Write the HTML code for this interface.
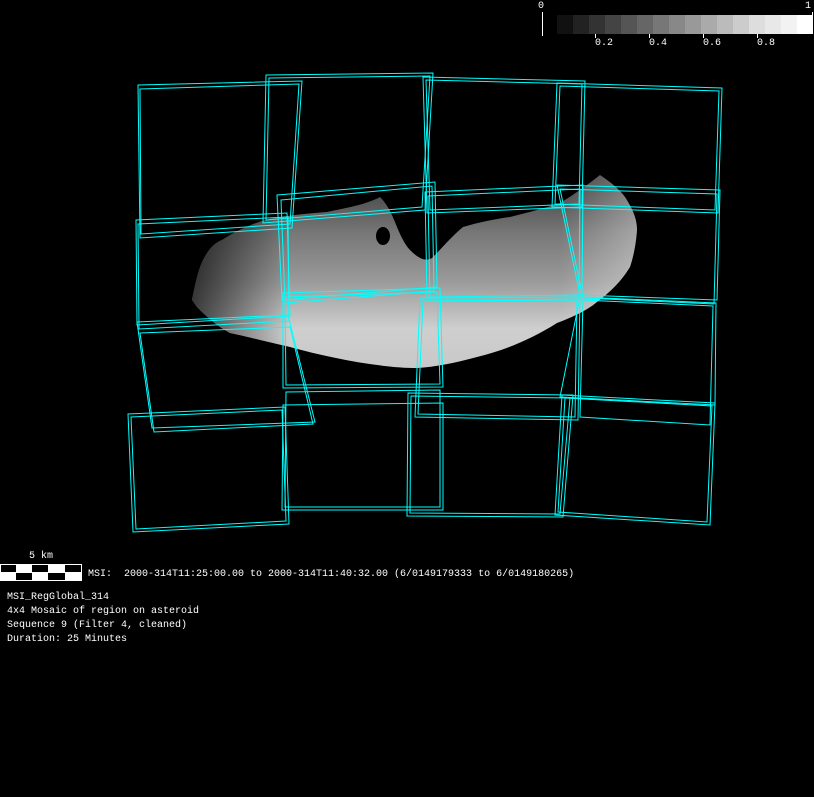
<!DOCTYPE html>
<html><head><style>
html,body{margin:0;padding:0;background:#000;}
body{width:814px;height:797px;position:relative;overflow:hidden;font-family:"Liberation Mono",monospace;color:#fff;font-size:10px;}
.t{position:absolute;white-space:pre;line-height:12px;}
</style></head><body>
<svg width="814" height="797" style="position:absolute;left:0;top:0">
<defs>
<linearGradient id="g" gradientUnits="userSpaceOnUse" x1="0" y1="175" x2="0" y2="368">
<stop offset="0" stop-color="#3a3a3a"/><stop offset="0.3" stop-color="#777"/><stop offset="0.55" stop-color="#9a9a9a"/><stop offset="0.8" stop-color="#cfcfcf"/><stop offset="1" stop-color="#c8c8c8"/>
</linearGradient>
<linearGradient id="l" gradientUnits="userSpaceOnUse" x1="190" y1="0" x2="290" y2="0">
<stop offset="0" stop-color="#000" stop-opacity="0.7"/><stop offset="1" stop-color="#000" stop-opacity="0"/>
</linearGradient>
<linearGradient id="r" gradientUnits="userSpaceOnUse" x1="560" y1="0" x2="640" y2="0">
<stop offset="0" stop-color="#fff" stop-opacity="0"/><stop offset="1" stop-color="#fff" stop-opacity="0.35"/>
</linearGradient>
</defs>
<g id="ast">
<path d="M192,300 C195,285 198,270 203,260 C208,250 214,243 222,240 C240,228 260,220 280,217 C300,214 315,213 327,212 C345,208 365,205 380,197 C388,205 392,215 395,222 C400,235 405,245 410,250 C418,258 425,262 432,258 C442,248 452,236 463,227 C480,222 495,219 510,217 C530,212 545,208 560,203 C575,194 590,183 600,175 C612,183 620,190 625,197 C632,208 637,218 637,230 C636,245 633,258 630,267 C620,283 610,292 597,302 C585,312 570,318 557,323 C530,340 505,350 477,357 C455,363 435,367 417,368 C380,368 330,358 290,347 C260,340 240,335 230,333 C215,325 205,315 197,307 Z" fill="url(#g)"/>
<path d="M192,300 C195,285 198,270 203,260 C208,250 214,243 222,240 C240,228 260,220 280,217 L290,217 L290,347 C260,340 240,335 230,333 C215,325 205,315 197,307 Z" fill="url(#l)"/>
<path d="M560,203 C575,194 590,183 600,175 C612,183 620,190 625,197 C632,208 637,218 637,230 C636,245 633,258 630,267 C620,283 610,292 597,302 C585,312 570,318 557,323 Z" fill="url(#r)"/>
</g>
<ellipse cx="383" cy="236" rx="7" ry="9" fill="#000"/>
<g fill="none" stroke="#00ffff" stroke-width="1">
<polygon points="138,85 302,81 292,228 140,238"/><polygon points="140,89 299,84 290,224 141,234"/>
<polygon points="266,75 433,73 425,210 263,223"/><polygon points="269,78 430,76 422,207 266,220"/>
<polygon points="423,77 585,81 582,207 427,213"/><polygon points="426,80 582,84 579,204 430,210"/>
<polygon points="557,83 722,88 718,213 552,207"/><polygon points="560,86 719,91 715,210 555,204"/>
<polygon points="136,220 287,213 290,316 137,325"/><polygon points="138,224 288,217 289,321 139,329"/>
<polygon points="277,195 435,182 437,287 282,300"/><polygon points="281,200 432,186 434,291 285,303"/>
<polygon points="425,192 583,185 582,295 427,297"/><polygon points="428,196 580,189 579,299 430,301"/>
<polygon points="557,185 720,190 717,300 580,295"/><polygon points="560,189 717,194 714,304 583,298"/>
<polygon points="137,322 288,315 315,422 152,428"/><polygon points="140,333 290,327 313,424 154,432"/>
<polygon points="283,293 440,288 443,387 283,388"/><polygon points="285,297 437,292 440,384 286,385"/>
<polygon points="420,298 580,297 578,420 415,417"/><polygon points="423,301 577,300 575,417 418,414"/>
<polygon points="580,297 716,303 715,405 560,397"/><polygon points="583,300 713,306 710,425 580,417"/>
<polygon points="128,414 285,407 289,524 133,532"/><polygon points="131,417 282,410 286,521 136,529"/>
<polygon points="283,405 443,403 443,510 282,510"/><polygon points="286,392 440,390 440,507 285,507"/>
<polygon points="408,393 573,395 563,517 407,516"/><polygon points="411,396 570,398 560,514 410,513"/>
<polygon points="562,395 715,403 710,525 555,515"/><polygon points="565,398 712,406 707,522 558,512"/>
</g>
<g>
<rect x="557" y="15" width="16" height="19" fill="#111"/><rect x="573" y="15" width="16" height="19" fill="#222"/>
<rect x="589" y="15" width="16" height="19" fill="#333"/><rect x="605" y="15" width="16" height="19" fill="#444"/>
<rect x="621" y="15" width="16" height="19" fill="#555"/><rect x="637" y="15" width="16" height="19" fill="#666"/>
<rect x="653" y="15" width="16" height="19" fill="#777"/><rect x="669" y="15" width="16" height="19" fill="#888"/>
<rect x="685" y="15" width="16" height="19" fill="#999"/><rect x="701" y="15" width="16" height="19" fill="#aaa"/>
<rect x="717" y="15" width="16" height="19" fill="#bbb"/><rect x="733" y="15" width="16" height="19" fill="#ccc"/>
<rect x="749" y="15" width="16" height="19" fill="#ddd"/><rect x="765" y="15" width="16" height="19" fill="#e8e8e8"/>
<rect x="781" y="15" width="16" height="19" fill="#f2f2f2"/><rect x="797" y="15" width="16" height="19" fill="#fff"/>
<g stroke="#fff" stroke-width="1">
<line x1="542.5" y1="12" x2="542.5" y2="36"/><line x1="812.5" y1="12" x2="812.5" y2="34"/>
<line x1="595.5" y1="34" x2="595.5" y2="38"/><line x1="649.5" y1="34" x2="649.5" y2="38"/>
<line x1="703.5" y1="34" x2="703.5" y2="38"/><line x1="757.5" y1="34" x2="757.5" y2="38"/>
</g>
</g>
<rect x="0" y="564" width="82" height="17" fill="#fff"/>
<g fill="#000">
<rect x="1" y="565" width="15" height="7"/><rect x="32" y="565" width="16" height="7"/><rect x="65" y="565" width="16" height="7"/>
<rect x="16" y="573" width="16" height="7"/><rect x="48" y="573" width="17" height="7"/>
</g>
</svg>
<div class="t" style="left:538px;top:1px">0</div>
<div class="t" style="left:805px;top:1px">1</div>
<div class="t" style="left:595px;top:38px">0.2</div>
<div class="t" style="left:649px;top:38px">0.4</div>
<div class="t" style="left:703px;top:38px">0.6</div>
<div class="t" style="left:757px;top:38px">0.8</div>
<div class="t" style="left:29px;top:551px">5 km</div>
<div class="t" style="left:88px;top:569px">MSI:  2000-314T11:25:00.00 to 2000-314T11:40:32.00 (6/0149179333 to 6/0149180265)</div>
<div class="t" style="left:7px;top:592px">MSI_RegGlobal_314</div>
<div class="t" style="left:7px;top:606px">4x4 Mosaic of region on asteroid</div>
<div class="t" style="left:7px;top:620px">Sequence 9 (Filter 4, cleaned)</div>
<div class="t" style="left:7px;top:634px">Duration: 25 Minutes</div>
</body></html>
